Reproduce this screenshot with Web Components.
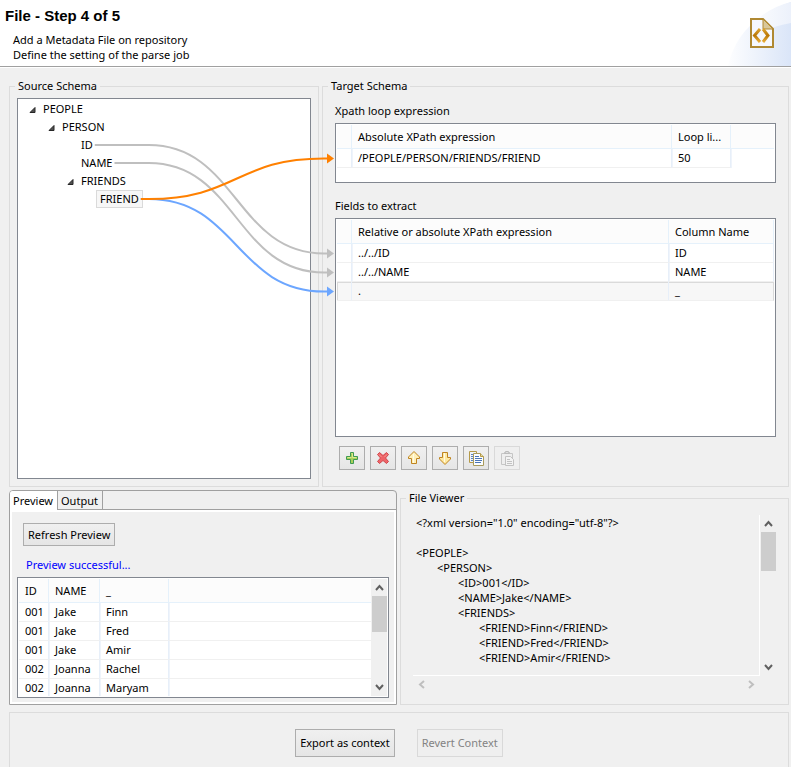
<!DOCTYPE html>
<html lang="en">
<head>
<meta charset="utf-8">
<title>File - Step 4 of 5</title>
<style>
  html {
    background: #f0f0f0;
  }
  body {
    margin: 0;
    color: #000;
    font: 11px/16px "Noto Sans", "Open Sans", sans-serif;
  }
</style>
</head>
<body>
<metadata-wizard></metadata-wizard>

<script>
const ICONS = {
  add: `
    <path d="M6.5 2.5h3v4h4v3h-4v4h-3v-4h-4v-3h4z" fill="#a9d05a" stroke="#3f9a52"/>
    <path d="M7.5 3.5h1v4h4M3.5 7.5h4" fill="none" stroke="#dcea8c"/>`,
  remove: `
    <path d="M2.5 4.5l2-2L8 5.500l3.500-3 2 2L10.500 8l3 3.500-2 2L8 10.500l-3.500 3-2-2L5.500 8z" fill="#ee6468" stroke="#d0474c" stroke-linejoin="round"/>
    <path d="M4 4.500L6.500 7M12 4.500L9.500 7" stroke="#f79a92" fill="none"/>`,
  up: `
    <path d="M8 1.500L13.500 7v1.500h-3v5h-5v-5h-3V7z" fill="#fff0b8" stroke="#bf8420"/>
    <path d="M7.500 4v9" stroke="#fffbe8"/>`,
  down: `
    <path d="M8 14.500L13.500 9V7.500h-3v-5h-5v5h-3V9z" fill="#ffe9a0" stroke="#bf8420"/>
    <path d="M7.500 3v9" stroke="#fffbe8"/>`,
  copy: `
    <path d="M1.500 1.500h7v11h-7z" fill="#eef4fc" stroke="#b59a48"/>
    <path d="M3 4.500h2M3 6.500h2M3 8.500h2M3 10.500h2" stroke="#5d83bd"/>
    <path d="M5.500 3.500h7l3 3v9h-10z" fill="#fbfdff" stroke="#a89a5c"/>
    <path d="M12.500 3.500v3h3" fill="#e6d79c" stroke="#b59a48"/>
    <path d="M7 6.500h4M7 8.500h7M7 10.500h7M7 12.500h6" stroke="#4b76b8"/>`,
  paste: `
    <path d="M2.500 3.500h11v11h-11z" fill="#eee" stroke="#c6c6c6"/>
    <path d="M5.500 3.500v-1h1v-1h3v1h1v1z" fill="#ddd" stroke="#bbb"/>
    <path d="M6.500 6.500h5l3 3v6h-8z" fill="#f3f3f3" stroke="#c2c2c2"/>
    <path d="M8 9.500h3M8 11.500h5M8 13.500h5" stroke="#c2c2c2"/>`
}

function define(name, html, setup = {}) {
  const template = document.createElement('template')
  template.innerHTML = html
  class Base extends HTMLElement {
    constructor() {
      super()
      this.attachShadow({ mode: 'open' }).append(template.content.cloneNode(true))
    }

    $(selector) {
      return this.shadowRoot.querySelector(selector)
    }

    connectedCallback() {
      this.ready?.()
    }
  }
  Object.defineProperties(Base.prototype, Object.getOwnPropertyDescriptors(setup))
  customElements.define(name, Base)
}

define('wizard-header', `
  <style>
    :host {
      display: block;
      position: relative;
      background: #fff;
      border-bottom: 1px solid #a0a0a0;
      box-shadow: 0 1px #fff;
      padding: 6px 5px 4px;
    }
    h1 {
      margin: 0 0 6px;
      font: bold 15px/20px "Liberation Sans", Arial, sans-serif;
    }
    p {
      margin: 0 8px;
      line-height: 15px;
    }
    svg {
      position: absolute;
      top: 0;
      right: 0;
    }
  </style>
  <h1><slot name="title"></slot></h1>
  <p><slot></slot></p>
  <svg width="91" height="66" viewBox="0 0 91 66" aria-hidden="true">
    <defs>
      <linearGradient id="sky" x1="25" x2="91" y1="0" y2="0" gradientUnits="userSpaceOnUse">
        <stop offset="0" stop-color="#fff"/>
        <stop offset="1" stop-color="#dae5f8"/>
      </linearGradient>
      <linearGradient id="glow" x1="45" x2="91" y1="0" y2="0" gradientUnits="userSpaceOnUse">
        <stop offset="0" stop-color="#fff"/>
        <stop offset="1" stop-color="#ecf1fb"/>
      </linearGradient>
      <linearGradient id="gold" x2="0" y2="1">
        <stop offset="0" stop-color="#dda22d"/>
        <stop offset=".5" stop-color="#b97708"/>
        <stop offset="1" stop-color="#e8ad38"/>
      </linearGradient>
    </defs>
    <path d="M28 66Q38 20 91 2V66z" fill="url(#sky)"/>
    <path d="M50 27Q66 8 91 2V23Q72 26 60 34z" fill="url(#glow)"/>
    <path d="M51 19h12l10 10v18H51z" fill="#f6f8fd" stroke="#b08932" stroke-width="2"/>
    <path d="M63 19v10h10z" fill="#d9c79a" stroke="#b08932"/>
    <path d="M60 29l-5.500 6.500L60 42M63 29l5 6.500L63 42" fill="none" stroke="url(#gold)" stroke-width="3"/>
  </svg>
`)

define('group-box', `
  <style>
    :host {
      display: block;
      min-width: 0;
    }
    fieldset {
      display: flex;
      flex-direction: column;
      box-sizing: border-box;
      height: 100%;
      min-width: 0;
      margin: 0;
      padding: 0;
      border: 1px solid #dcdcdc;
    }
    legend {
      margin-left: 5px;
      padding: 0 3px;
    }
    ::slotted(*) {
      flex: 1;
    }
  </style>
  <fieldset>
    <legend></legend>
    <slot></slot>
  </fieldset>
`, {
  ready() {
    this.$('legend').textContent = this.getAttribute('label')
  }
})

define('push-button', `
  <style>
    :host {
      display: inline-flex;
    }
    button {
      display: flex;
      align-items: center;
      justify-content: center;
      box-sizing: border-box;
      min-width: 26px;
      min-height: var(--button-height, 24px);
      margin: 0;
      padding: 0 4px;
      border: 1px solid #adadad;
      background: linear-gradient(#f0f0f0, #e5e5e5);
      color: inherit;
      font: inherit;
    }
    button:hover:enabled {
      border-color: #7eb4ea;
    }
    button:disabled {
      border-color: #d9d9d9;
      background: #efefef;
      color: #838383;
    }
    svg {
      display: block;
    }
  </style>
  <button type="button"><slot></slot></button>
`, {
  ready() {
    const button = this.$('button')
    const icon = this.getAttribute('icon')
    button.disabled = this.hasAttribute('disabled')
    if (icon) {
      button.setAttribute('aria-label', icon)
      button.innerHTML = `<svg width="16" height="16" viewBox="0 0 16 16">${ICONS[icon]}</svg>`
    }
  }
})

define('scroll-track', `
  <style>
    :host {
      display: flex;
      flex-direction: column;
      align-items: center;
      box-sizing: border-box;
      width: 16px;
      background: #f0f0f0;
      color: #606060;
    }
    :host([horizontal]) {
      flex-direction: row;
      justify-content: space-between;
      width: auto;
      height: 16px;
      color: #bfbfbf;
    }
    svg {
      flex: none;
      width: 17px;
      height: 17px;
      fill: none;
      stroke: currentColor;
      stroke-width: 2;
    }
    .thumb {
      width: 15px;
      height: var(--thumb, 36px);
      margin-bottom: auto;
      background: #cdcdcd;
    }
    :host([horizontal]) .thumb {
      display: none;
    }
    :host([horizontal]) svg {
      rotate: -90deg;
    }
  </style>
  <svg viewBox="0 0 17 17"><path d="M5 11l3.500-4 3.500 4"/></svg>
  <div class="thumb"></div>
  <svg viewBox="0 0 17 17"><path d="M5 6l3.500 4 3.500-4"/></svg>
`)

define('schema-tree', `
  <style>
    :host {
      display: block;
      box-sizing: border-box;
      border: 1px solid #828790;
      background: #fff;
      padding: 1px 11px;
    }
    ul {
      margin: 0;
      padding: 0;
      list-style: none;
    }
    ul ul {
      padding-left: 19px;
    }
    .node {
      display: flex;
      align-items: center;
      height: 18px;
    }
    svg {
      width: 10px;
      height: 8px;
    }
    .label {
      box-sizing: border-box;
      height: 18px;
      padding: 0 3px;
      border: 1px solid transparent;
    }
    .selected {
      border-color: #dadada;
      background: #f7f7f7;
    }
  </style>
  <ul role="tree"></ul>
`, {
  set nodes(nodes) {
    this.$('ul').innerHTML = this.items(nodes)
  },

  items(nodes) {
    return nodes.map(({ name, selected, children }) => `
      <li role="treeitem">
        <div class="node">
          <svg viewBox="0 0 10 8">${children ? '<path d="M6 2.500v5H1z" fill="#505050" stroke="#262626"/>' : ''}</svg>
          <span class="label${selected ? ' selected' : ''}" data-name="${name}">${name}</span>
        </div>
        ${children ? `<ul role="group">${this.items(children)}</ul>` : ''}
      </li>`).join('')
  },

  anchor(name) {
    const box = this.$(`[data-name="${name}"]`).getBoundingClientRect()
    return { x: box.right - 2, y: box.top + box.height / 2 }
  }
})

define('data-grid', `
  <style>
    :host {
      display: flex;
      box-sizing: border-box;
      border: 1px solid #828790;
      background: #fff;
      padding: 1px;
      overflow: hidden;
    }
    .view {
      flex: 1;
      min-width: 0;
      overflow: hidden;
    }
    table {
      width: 100%;
      table-layout: fixed;
      border-collapse: separate;
      border-spacing: 0;
    }
    th,
    td {
      box-sizing: border-box;
      height: 19px;
      padding: 0 0 0 6px;
      border: 0 solid #f0f0f0;
      border-width: 0 0 1px;
      font-weight: normal;
      text-align: left;
      white-space: nowrap;
      overflow: hidden;
      line-height: 16px;
    }
    th {
      height: 24px;
      background: #fcfcfc;
      border-color: #e5f1fb;
      border-right-width: 1px;
    }
    td {
      border-right: 1px solid #e7eff9;
      box-shadow: inset 1px 0 #eff4fb;
    }
    td:first-child {
      box-shadow: none;
    }
    :host([filler]) th:last-child,
    :host([filler]) td:last-child {
      border-right: 0;
    }
    :host([filler="blank"]) td:last-child {
      border: 0;
    }
    .selected td {
      background: #f7f7f7;
      box-shadow: inset 0 1px #dadada;
    }
    .selected td:first-child {
      box-shadow: inset 1px 1px #dadada;
    }
    .selected td:last-child {
      border-right-color: #dadada;
    }
  </style>
  <div class="view">
    <table>
      <colgroup></colgroup>
      <thead></thead>
      <tbody></tbody>
    </table>
  </div>
  <slot></slot>
`, {
  set data({ columns, rows, selected }) {
    this.$('colgroup').innerHTML = columns
      .map(({ width }) => `<col${width ? ` style="width:${width}px"` : ''}>`).join('')
    this.$('thead').innerHTML = `<tr>${columns.map(({ title }) => `<th>${title}</th>`).join('')}</tr>`
    this.$('tbody').innerHTML = rows
      .map((row, i) => `<tr${i === selected ? ' class="selected"' : ''}>${row.map((cell) => `<td>${cell}</td>`).join('')}</tr>`)
      .join('')
  },

  anchor(index) {
    const row = this.shadowRoot.querySelectorAll('tbody tr')[index].getBoundingClientRect()
    return { x: this.getBoundingClientRect().left - 1, y: row.top + row.height / 2 }
  }
})

define('schema-mapper', `
  <style>
    :host {
      display: grid;
      grid-template-columns: calc(40% - 2px) minmax(0, 1fr);
      gap: 3px;
      position: relative;
    }
    .source {
      display: flex;
      padding: 4px 7px 7px;
    }
    schema-tree {
      flex: 1;
    }
    .target {
      display: flex;
      flex-direction: column;
      gap: 4px;
      padding: 9px 12px 16px;
    }
    .loop {
      min-height: 60px;
      margin-bottom: 11px;
    }
    .fields {
      flex: 1;
      min-height: 219px;
      margin-bottom: 5px;
    }
    .tools {
      display: flex;
      gap: 5px;
      padding-left: 4px;
    }
    .links {
      position: absolute;
      inset: 0;
      width: 100%;
      height: 100%;
      pointer-events: none;
      fill: none;
      stroke-width: 2;
    }
  </style>
  <group-box label="Source Schema">
    <div class="source"><schema-tree></schema-tree></div>
  </group-box>
  <group-box label="Target Schema">
    <div class="target">
      <div>Xpath loop expression</div>
      <data-grid class="loop" filler="blank"></data-grid>
      <div>Fields to extract</div>
      <data-grid class="fields"></data-grid>
      <div class="tools">
        <push-button icon="add"></push-button>
        <push-button icon="remove"></push-button>
        <push-button icon="up"></push-button>
        <push-button icon="down"></push-button>
        <push-button icon="copy"></push-button>
        <push-button icon="paste" disabled></push-button>
      </div>
    </div>
  </group-box>
  <svg class="links" aria-hidden="true"></svg>
`, {
  ready() {
    this.$('schema-tree').nodes = [
      { name: 'PEOPLE', children: [
        { name: 'PERSON', children: [
          { name: 'ID' },
          { name: 'NAME' },
          { name: 'FRIENDS', children: [{ name: 'FRIEND', selected: true }] }
        ] }
      ] }
    ]
    this.$('.loop').data = {
      columns: [
        { title: '', width: 15 },
        { title: 'Absolute XPath expression' },
        { title: 'Loop li...', width: 59 },
        { title: '', width: 43 }
      ],
      rows: [['', '/PEOPLE/PERSON/FRIENDS/FRIEND', '50', '']]
    }
    this.$('.fields').data = {
      columns: [
        { title: '', width: 15 },
        { title: 'Relative or absolute XPath expression' },
        { title: 'Column Name', width: 105 }
      ],
      rows: [
        ['', '../../ID', 'ID'],
        ['', '../../NAME', 'NAME'],
        ['', '.', '_']
      ],
      selected: 2
    }
    new ResizeObserver(() => this.drawLinks()).observe(this)
  },

  drawLinks() {
    const links = [
      ['ID', '.fields', 0, '#bfbfbf'],
      ['NAME', '.fields', 1, '#bfbfbf'],
      ['FRIEND', '.fields', 2, '#6ca6ff'],
      ['FRIEND', '.loop', 0, '#ff8000']
    ]
    const origin = this.getBoundingClientRect()
    const tree = this.$('schema-tree')
    // every curve bends from the same column, right of the deepest node
    const bend = tree.anchor('FRIEND').x - origin.left + 8
    this.$('.links').innerHTML = links.map(([name, grid, row, color]) => {
      const from = tree.anchor(name)
      const to = this.$(grid).anchor(row)
      const x1 = from.x - origin.left
      const y1 = from.y - origin.top
      const x2 = to.x - origin.left
      const y2 = to.y - origin.top
      const end = x2 - 10
      const mid = (bend + end) / 2
      return `
        <path stroke="${color}" d="M${x1} ${y1}H${bend}C${mid} ${y1} ${mid} ${y2} ${end} ${y2}H${x2 - 6}"/>
        <path fill="${color}" d="M${x2 - 7} ${y2 - 5}L${x2} ${y2}L${x2 - 7} ${y2 + 5}z"/>`
    }).join('')
  }
})

define('preview-panel', `
  <style>
    :host {
      display: flex;
      flex-direction: column;
      box-sizing: border-box;
      min-width: 0;
      border: 1px solid #a0a0a0;
      border-radius: 4px 4px 0 0;
    }
    .tabs {
      display: flex;
      height: 18px;
      border-bottom: 1px solid #a0a0a0;
    }
    .tabs button {
      box-sizing: border-box;
      height: 18px;
      margin: 0;
      padding: 1px 4px 0 3px;
      border: 0;
      border-right: 1px solid #a0a0a0;
      background: none;
      color: inherit;
      font: inherit;
    }
    .tabs [aria-selected="true"] {
      height: 19px;
      padding-top: 0;
      background: #fff;
      border-radius: 3px 0 0 0;
    }
    .page {
      display: flex;
      flex-direction: column;
      flex: 1;
      border: 2px solid #fff;
      padding: 11px 5px 4px;
    }
    push-button {
      --button-height: 23px;
      align-self: flex-start;
      margin-left: 6px;
    }
    .status {
      margin: 11px 9px 4px;
      color: #00f;
    }
    data-grid {
      height: 121px;
    }
  </style>
  <div class="tabs" role="tablist">
    <button type="button" role="tab" aria-selected="true">Preview</button>
    <button type="button" role="tab" aria-selected="false">Output</button>
  </div>
  <div class="page" role="tabpanel">
    <push-button>Refresh Preview</push-button>
    <div class="status">Preview successful...</div>
    <data-grid filler="lined"><scroll-track></scroll-track></data-grid>
  </div>
`, {
  ready() {
    this.$('data-grid').data = {
      columns: [
        { title: 'ID', width: 30 },
        { title: 'NAME', width: 51 },
        { title: '_', width: 69 },
        { title: '' }
      ],
      rows: [
        ['001', 'Jake', 'Finn', ''],
        ['001', 'Jake', 'Fred', ''],
        ['001', 'Jake', 'Amir', ''],
        ['002', 'Joanna', 'Rachel', ''],
        ['002', 'Joanna', 'Maryam', '']
      ]
    }
  }
})

define('file-viewer', `
  <style>
    :host {
      display: grid;
      grid-template: 1fr 16px / minmax(0, 1fr) 16px;
      padding: 9px 12px 12px;
    }
    pre {
      margin: 0;
      padding: 0 3px;
      min-height: 160px;
      border: solid #fff;
      border-width: 0 1px 1px 0;
      font: inherit;
      line-height: 15px;
      tab-size: 21px;
      overflow: hidden;
    }
    scroll-track {
      --thumb: 39px;
    }
  </style>
  <pre></pre>
  <scroll-track></scroll-track>
  <scroll-track horizontal></scroll-track>
`, {
  ready() {
    this.$('pre').textContent = [
      '<?xml version="1.0" encoding="utf-8"?>',
      '',
      '<PEOPLE>',
      '\t<PERSON>',
      '\t\t<ID>001</ID>',
      '\t\t<NAME>Jake</NAME>',
      '\t\t<FRIENDS>',
      '\t\t\t<FRIEND>Finn</FRIEND>',
      '\t\t\t<FRIEND>Fred</FRIEND>',
      '\t\t\t<FRIEND>Amir</FRIEND>'
    ].join('\n')
  }
})

define('metadata-wizard', `
  <style>
    :host {
      display: flex;
      flex-direction: column;
      min-height: 100vh;
    }
    main {
      display: flex;
      flex-direction: column;
      flex: 1;
      gap: 3px;
      padding: 11px 2px 0 9px;
    }
    .lower {
      display: grid;
      grid-template-columns: calc(50% - 2px) minmax(0, 1fr);
      gap: 3px;
    }
    footer {
      display: flex;
      flex: 1;
      align-items: flex-start;
      justify-content: center;
      gap: 22px;
      margin-top: 4px;
      padding: 16px 0 10px;
      border: 1px solid #dcdcdc;
      border-bottom: 0;
      --button-height: 28px;
    }
  </style>
  <wizard-header>
    <span slot="title">File - Step 4 of 5</span>
    Add a Metadata File on repository<br>Define the setting of the parse job
  </wizard-header>
  <main>
    <schema-mapper></schema-mapper>
    <div class="lower">
      <preview-panel></preview-panel>
      <group-box label="File Viewer"><file-viewer></file-viewer></group-box>
    </div>
    <footer>
      <push-button>Export as context</push-button>
      <push-button disabled>Revert Context</push-button>
    </footer>
  </main>
`)
</script>
</body>
</html>
